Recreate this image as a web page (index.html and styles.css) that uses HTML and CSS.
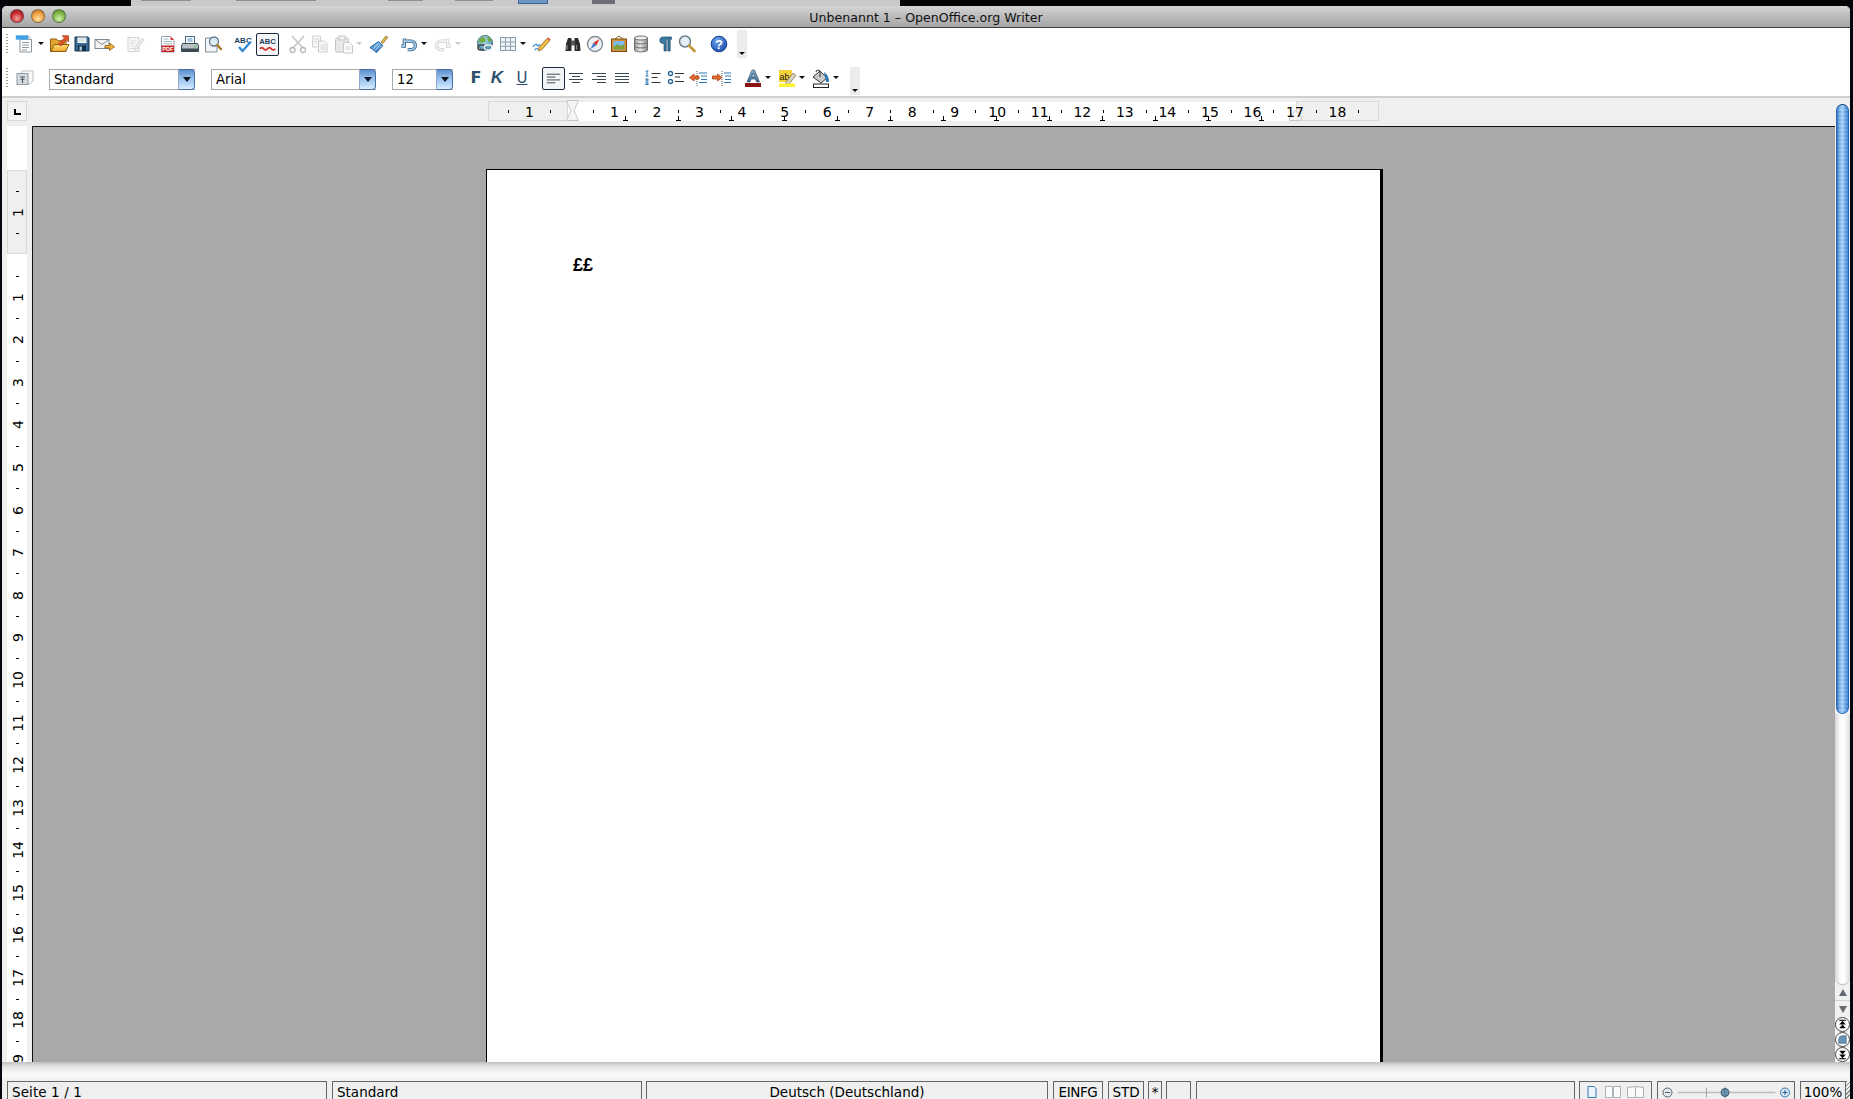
FILE: index.html
```html
<!DOCTYPE html>
<html lang="de">
<head>
<meta charset="utf-8">
<title>Unbenannt 1 – OpenOffice.org Writer</title>
<link rel="stylesheet" href="styles.css">
</head>
<body>
<svg class="sprite" xmlns="http://www.w3.org/2000/svg" width="0" height="0">
  <defs>
    <linearGradient id="gBlue" x1="0" y1="0" x2="0" y2="1"><stop offset="0" stop-color="#8cc0ea"/><stop offset="1" stop-color="#2f78bd"/></linearGradient>
    <linearGradient id="gOrange" x1="0" y1="0" x2="0" y2="1"><stop offset="0" stop-color="#ffe07a"/><stop offset="1" stop-color="#eaa52a"/></linearGradient>
    <linearGradient id="gSteel" x1="0" y1="0" x2="0" y2="1"><stop offset="0" stop-color="#8fb2cf"/><stop offset="1" stop-color="#3e6a90"/></linearGradient>
    <radialGradient id="gHelp" cx=".4" cy=".3" r=".8"><stop offset="0" stop-color="#6fa5ee"/><stop offset="1" stop-color="#1647a8"/></radialGradient>
    <radialGradient id="gGlobe" cx=".4" cy=".3" r=".8"><stop offset="0" stop-color="#bfe3f0"/><stop offset="1" stop-color="#3d85a8"/></radialGradient>
    <linearGradient id="gDb" x1="0" y1="0" x2="1" y2="0"><stop offset="0" stop-color="#9b9b9b"/><stop offset=".45" stop-color="#e8e8e8"/><stop offset="1" stop-color="#8a8a8a"/></linearGradient>

    <symbol id="i-new" viewBox="0 0 22 22">
      <path d="M5 6.500h11.500V19H5z" fill="#fff" stroke="#8c959c"/><path d="M7 9.500h7M7 12h7M7 14.500h7M7 17h5" stroke="#8d979f" fill="none"/>
      <rect x="1" y="2.500" width="12" height="4" fill="#3ba0e6" stroke="#5fb5ee" stroke-width=".5"/><path d="M13 2.500l3.500 4H13z" fill="#e4e8ea" stroke="#8c959c" stroke-width=".6"/>
    </symbol>
    <symbol id="i-open" viewBox="0 0 22 22">
      <path d="M2.500 18.500V6h6l1.500 1.800h8v10.700z" fill="#e6a430" stroke="#8f5c10"/>
      <path d="M3 18.500l3-7h15l-3.300 7z" fill="url(#gOrange)" stroke="#8f5c10"/>
      <path d="M10.500 11L16.500 5l-2.300-2.200H20.500V9l-2.200-2.200L13 13z" fill="#e2562b" stroke="#9a2f14" stroke-width=".7"/>
    </symbol>
    <symbol id="i-save" viewBox="0 0 22 22">
      <path d="M4 4h13l1 1v13H4z" fill="#3a6a92" stroke="#17364f"/>
      <rect x="6.500" y="4.500" width="9" height="5.500" fill="#fff"/><path d="M7.500 6h7M7.500 8h7" stroke="#a9bccb" stroke-width=".8"/>
      <rect x="7" y="12.500" width="8" height="5.500" fill="#12324b"/><rect x="8.500" y="13.500" width="2.500" height="4" fill="#a8c2d5"/>
    </symbol>
    <symbol id="i-mail" viewBox="0 0 22 22">
      <rect x="1" y="6.500" width="14" height="9" fill="#f3f3f3" stroke="#7e8c97"/><path d="M1 6.500l7 5 7-5" fill="none" stroke="#7e8c97"/>
      <path d="M11 12.500h4.500V10l5 3.800-5 3.700v-2.500H11z" fill="#efb23a" stroke="#8b5c12" stroke-width=".8"/>
    </symbol>
    <symbol id="i-edit" viewBox="0 0 22 22">
      <path d="M4 4.500h11v14H4z" fill="#f7f7f7" stroke="#d3d3d3"/><path d="M6 8h7M6 10.500h5M6 13h4M6 15.500h6" stroke="#dadada"/>
      <path d="M11 14.500l7-9 2 1.600-7 8.800-2.600.9z" fill="#ececec" stroke="#cfcfcf" stroke-width=".8"/>
    </symbol>
    <symbol id="i-pdf" viewBox="0 0 22 22">
      <path d="M4.500 3.500h9l3.500 3.500v12H4.500z" fill="#fff" stroke="#9aa3aa"/><path d="M13.500 3.500l3.500 3.500h-3.500z" fill="#e23b3b"/>
      <path d="M6.500 6h5M6.500 8.500h8.500M6.500 10.800h8.500" stroke="#9fb2c2"/>
      <rect x="4.500" y="12.500" width="12.500" height="6.500" fill="#cf2222"/><text x="10.800" y="18" class="svg-pdf" text-anchor="middle">PDF</text>
    </symbol>
    <symbol id="i-print" viewBox="0 0 22 22">
      <rect x="6.500" y="3.500" width="9" height="8" fill="#fff" stroke="#4b6a84"/><path d="M8.500 6h5M8.500 8h5" stroke="#4b8bc0"/>
      <path d="M3.500 10.500h15l1 2.500v5.500h-17V13z" fill="#b9c0c5" stroke="#3a4a55"/><rect x="3" y="15.500" width="16" height="3" fill="#3c4a54"/><circle cx="16" cy="13.500" r=".9" fill="#58c14c"/>
    </symbol>
    <symbol id="i-preview" viewBox="0 0 22 22">
      <path d="M3.500 5h8.500l3 3v11H3.500z" fill="#f2f5f7" stroke="#7e8c97"/>
      <circle cx="12" cy="8.500" r="4.500" fill="#dcebf5" fill-opacity=".9" stroke="#5f7485" stroke-width="1.300"/>
      <path d="M15.300 12l3.700 4.200" stroke="#a8762a" stroke-width="2.300" stroke-linecap="round"/>
    </symbol>
    <symbol id="i-spell" viewBox="0 0 22 22">
      <text x="11" y="10" class="svg-abc" text-anchor="middle">ABC</text>
      <path d="M7 14l3.500 4 8-9" fill="none" stroke="#2f8bd6" stroke-width="2.300"/>
    </symbol>
    <symbol id="i-autospell" viewBox="0 0 22 22">
      <text x="11" y="10.500" class="svg-abc" text-anchor="middle">ABC</text>
      <path d="M3 15.500q2-2.500 4 0t4 0 4 0 4 0" fill="none" stroke="#d62a20" stroke-width="1.800"/>
    </symbol>
    <symbol id="i-cut" viewBox="0 0 22 22">
      <path d="M5 3l11 12M17 3L6 15" stroke="#c9c9c9" stroke-width="1.800" fill="none"/>
      <circle cx="5.500" cy="17" r="2.500" fill="none" stroke="#b8b8b8" stroke-width="1.300"/><circle cx="16" cy="17" r="2.500" fill="none" stroke="#b8b8b8" stroke-width="1.300"/>
    </symbol>
    <symbol id="i-copy" viewBox="0 0 22 22">
      <path d="M3.500 3h8v11h-8z" fill="#f7f7f7" stroke="#d0d0d0"/><path d="M9.500 8h6l2.500 2.500V19H9.500z" fill="#f7f7f7" stroke="#cbcbcb"/>
      <path d="M11.500 12h5M11.500 14h5M11.500 16h5" stroke="#d5d5d5"/><path d="M5 6h5M5 8.500h3" stroke="#d5d5d5"/>
    </symbol>
    <symbol id="i-paste" viewBox="0 0 22 22">
      <rect x="2.500" y="5" width="13" height="14" rx="1.500" fill="#e8e8e8" stroke="#c3c3c3"/><rect x="6" y="3" width="6" height="4" fill="#f3f3f3" stroke="#c3c3c3"/>
      <path d="M10.500 9.500h6l3 3V20h-9z" fill="#fbfbfb" stroke="#c8c8c8"/><path d="M12.500 14h5M12.500 16h5" stroke="#d5d5d5"/>
    </symbol>
    <symbol id="i-brush" viewBox="0 0 22 22">
      <path d="M14 9l5-6 1.800 1.500-5 6z" fill="#e8b94a" stroke="#80601c" stroke-width=".7"/>
      <path d="M3 14.500l8.500-6 4.300 4L9.500 19.500z" fill="url(#gBlue)" stroke="#1f5d96"/>
      <path d="M5.500 16.500l5-5M7.500 18l5-5" stroke="#d5eafb" stroke-width=".8"/>
    </symbol>
    <symbol id="i-undo" viewBox="0 0 22 22">
      <g transform="translate(11 11) scale(.85) translate(-11 -11)">
        <path d="M5.500 4.500v9H2M5.500 7.500h8a5 5 0 0 1 0 10h-4" fill="none" stroke="#2f5d84" stroke-width="3.800"/>
        <path d="M5.500 4.500v9H2M5.500 7.500h8a5 5 0 0 1 0 10h-4" fill="none" stroke="#a9cbe6" stroke-width="2"/>
      </g>
    </symbol>
    <symbol id="i-redo" viewBox="0 0 22 22">
      <g transform="translate(11 11) scale(.85) translate(-11 -11)">
        <path d="M16.500 4.500v9H20M16.500 7.500h-8a5 5 0 0 0 0 10h4" fill="none" stroke="#cdcdcd" stroke-width="3.800"/>
        <path d="M16.500 4.500v9H20M16.500 7.500h-8a5 5 0 0 0 0 10h4" fill="none" stroke="#f6f6f6" stroke-width="2"/>
      </g>
    </symbol>
    <symbol id="i-globe" viewBox="0 0 22 22">
      <circle cx="11" cy="10" r="7.500" fill="url(#gGlobe)" stroke="#46707f"/>
      <path d="M5.500 6q3-3 5.500-1l1 3-4 2-3-1zM13 4q3 0 4.500 4l-3 1z" fill="#6fae3e"/>
      <rect x="4" y="12" width="7.500" height="5" rx="2.500" fill="none" stroke="#39464d" stroke-width="1.500"/><rect x="10.500" y="12" width="7.500" height="5" rx="2.500" fill="none" stroke="#e8eef1" stroke-width="1.500"/>
    </symbol>
    <symbol id="i-table" viewBox="0 0 22 22">
      <rect x="3.500" y="4.500" width="15" height="13" fill="#eef3f6" stroke="#8aa0b0"/>
      <path d="M8.500 4.500v13M13.500 4.500v13M3.500 9h15M3.500 13.300h15" stroke="#8aa0b0"/>
    </symbol>
    <symbol id="i-pencil" viewBox="0 0 22 22">
      <path d="M2 14q2.500-4 4-2t3-1" fill="none" stroke="#3e8bd2" stroke-width="1.300"/><path d="M3.500 17q2-2 3.500-1" fill="none" stroke="#3e8bd2" stroke-width="1.300"/>
      <path d="M8 14.500l8-9 2.700 2.200-8 9-3.400 1.100z" fill="#f2c04a" stroke="#8c5f14" stroke-width=".8"/><path d="M16 5.500l2.700 2.200 1-1.500-2.400-1.900z" fill="#e0584e"/>
    </symbol>
    <symbol id="i-binoc" viewBox="0 0 22 22">
      <path d="M4 11l2-6h3.500v13H3.500z" fill="#2a2a2a"/><path d="M18 11l-2-6h-3.500v13h6z" fill="#2a2a2a"/><rect x="9" y="7.500" width="4" height="5" fill="#555"/>
      <path d="M5 12v4.500M14.500 12v4.500" stroke="#888" stroke-width="1.300"/>
    </symbol>
    <symbol id="i-compass" viewBox="0 0 22 22">
      <circle cx="11" cy="11" r="7.500" fill="#eef1f3" stroke="#7f8a92" stroke-width="1.300"/>
      <path d="M15.500 6l-6 3.700 2.800 2.800z" fill="#d8322a"/><path d="M6.500 16l3-6.300 2.800 2.800z" fill="#3d7fcf"/>
    </symbol>
    <symbol id="i-picture" viewBox="0 0 22 22">
      <path d="M7 6l4-3 4 3" fill="none" stroke="#8a5a1c"/><rect x="3.500" y="6" width="15" height="12.500" fill="#d88e2e" stroke="#7a4c12"/>
      <rect x="5.500" y="8" width="11" height="8.500" fill="#7dbcf0"/><path d="M5.500 16.500v-2.500l4-3 3 2 4-2v5.500z" fill="#7f9f38"/>
    </symbol>
    <symbol id="i-db" viewBox="0 0 22 22">
      <path d="M4.500 5v12c0 2.500 13 2.500 13 0V5z" fill="url(#gDb)" stroke="#6e6e6e"/><ellipse cx="11" cy="5" rx="6.500" ry="2" fill="#efefef" stroke="#6e6e6e"/>
      <path d="M4.500 9c0 2.500 13 2.500 13 0M4.500 13c0 2.500 13 2.500 13 0" fill="none" stroke="#6e6e6e"/>
    </symbol>
    <symbol id="i-para" viewBox="0 0 22 22">
      <path d="M10 18V10.500H8.500a3.300 3.300 0 0 1 0-6.500H17.500v2.300h-1.300V18h-2.400V6.300H12.300V18z" fill="#3a7aa5" stroke="#163c58" stroke-width=".6"/>
    </symbol>
    <symbol id="i-find" viewBox="0 0 22 22">
      <circle cx="9" cy="8.500" r="5.500" fill="#e3f0f8" stroke="#6d7e8a" stroke-width="1.500"/>
      <path d="M13 12.500l5.500 5.500" stroke="#c49536" stroke-width="2.600" stroke-linecap="round"/>
    </symbol>
    <symbol id="i-help" viewBox="0 0 22 22">
      <circle cx="11" cy="11" r="7.800" fill="url(#gHelp)" stroke="#123f92"/>
      <text x="11" y="15.500" class="svg-help" text-anchor="middle">?</text>
    </symbol>
    <symbol id="i-style" viewBox="0 0 22 22">
      <path d="M8 4h11v10l-3 3H8z" fill="#fafafa" stroke="#bcc2c6"/><rect x="3" y="6.500" width="11" height="11" fill="#d6dbdf" stroke="#8f9aa2"/>
      <path d="M6 10h5M8.500 10v6" stroke="#4f5f6a" stroke-width="1.100"/><path d="M6.500 12.500h4" stroke="#4f5f6a"/>
    </symbol>
    <symbol id="i-al" viewBox="0 0 22 22"><path d="M4 6.500h14M4 9.500h9M4 12.500h14M4 15.500h9" stroke="#3a4a55" fill="none"/></symbol>
    <symbol id="i-ac" viewBox="0 0 22 22"><path d="M4 6.500h14M7 9.500h8M4 12.500h14M7 15.500h8" stroke="#3a4a55" fill="none"/></symbol>
    <symbol id="i-ar" viewBox="0 0 22 22"><path d="M4 6.500h14M9 9.500h9M4 12.500h14M9 15.500h9" stroke="#3a4a55" fill="none"/></symbol>
    <symbol id="i-aj" viewBox="0 0 22 22"><path d="M4 6.500h14M4 9.500h14M4 12.500h14M4 15.500h14" stroke="#3a4a55" fill="none"/></symbol>
    <symbol id="i-num" viewBox="0 0 22 22">
      <path d="M9.500 6.500h9M9.500 10.500h6M9.500 15.500h9" stroke="#333" stroke-width="1.200" fill="none"/>
      <path d="M5 4v5M3.500 4h3M3.500 9h3M3.500 12h3M3.500 17.500h3M4.200 12v5.500M5.800 12v5.500" stroke="#2f79b5" fill="none"/>
    </symbol>
    <symbol id="i-bul" viewBox="0 0 22 22">
      <circle cx="5.500" cy="6.500" r="2" fill="none" stroke="#2a6a9c" stroke-width="1.400"/><circle cx="5.500" cy="14.500" r="2" fill="none" stroke="#2a6a9c" stroke-width="1.400"/>
      <path d="M10 6.500h9M10 10h5M10 14.500h9" stroke="#333" stroke-width="1.200" fill="none"/>
    </symbol>
    <symbol id="i-less" viewBox="0 0 22 22">
      <path d="M9 4v15" stroke="#555" stroke-dasharray="1 1" fill="none"/>
      <path d="M11 6h8M13 9h6M13 12.500h6M11 15.500h8" stroke="#2f79b5" stroke-width="1.200" fill="none"/>
      <path d="M1.500 10.500l4.500-3.500v2h5v3H6v2z" fill="#e86a2a" stroke="#9c3a10" stroke-width=".7"/>
    </symbol>
    <symbol id="i-more" viewBox="0 0 22 22">
      <path d="M11 4v15" stroke="#555" stroke-dasharray="1 1" fill="none"/>
      <path d="M13 6h7M14 9h6M14 12.500h6M13 15.500h7" stroke="#2f79b5" stroke-width="1.200" fill="none"/>
      <path d="M11 10.500L6.500 7v2h-5v3h5v2z" fill="#e86a2a" stroke="#9c3a10" stroke-width=".7"/>
    </symbol>
    <symbol id="i-fcolor" viewBox="0 0 22 22">
      <path d="M5 15L10 3h2.500L17.500 15h-3l-1-3h-4.500l-1 3zM9.800 9.800h3L11.300 6z" fill="url(#gSteel)" stroke="#1e4668" stroke-width=".6"/>
      <rect x="3" y="16" width="16" height="4" fill="#8d1414"/>
    </symbol>
    <symbol id="i-high" viewBox="0 0 22 22">
      <rect x="3" y="3" width="13" height="12" fill="#f5d23a"/><text x="3.500" y="12.500" class="svg-ab">ab</text>
      <path d="M10 15l7-9 3 2.400-7 8.600-3.500.8z" fill="#d9d2bc" stroke="#77705e" stroke-width=".7"/>
      <rect x="3" y="16.500" width="16" height="3.500" fill="#fff134"/>
    </symbol>
    <symbol id="i-bg" viewBox="0 0 22 22">
      <path d="M3 10l7-6 7 7-6 5z" fill="#c9c9c9" stroke="#333"/><path d="M6 5a2 2 0 0 1 4 0v5" fill="none" stroke="#333"/>
      <path d="M14 5q5 3 5 10h-3z" fill="#2f79b5"/><rect x="3.500" y="17" width="15" height="3.500" fill="#fff" stroke="#222"/>
    </symbol>
    <symbol id="i-prev" viewBox="0 0 14 14">
      <path d="M3.500 2.500h7" stroke="#000" stroke-width="1.200"/><path d="M7 3l3.500 4h-7z" fill="#000"/><path d="M7 7l3.500 4h-7z" fill="#000"/>
    </symbol>
    <symbol id="i-nextp" viewBox="0 0 14 14">
      <path d="M3.500 11.500h7" stroke="#000" stroke-width="1.200"/><path d="M7 11l3.500-4h-7z" fill="#000"/><path d="M7 7l3.500-4h-7z" fill="#000"/>
    </symbol>
    <symbol id="i-navi" viewBox="0 0 14 14">
      <path d="M3 11V7a4 4 0 0 1 4-4h4v8z" fill="#6d94b4" stroke="#3f6685" stroke-width=".8"/>
    </symbol>
  </defs>
</svg>

<div class="desktop">
  <div class="desktop-gap">
    <span class="tab tab-a"></span><span class="tab tab-b"></span><span class="tab tab-c"></span><span class="tab tab-d"></span>
    <span class="dock dock-blue"></span><span class="dock dock-grey"></span>
  </div>
</div>

<div class="window">
  <header class="titlebar">
    <div class="lights"><span class="light red"></span><span class="light orange"></span><span class="light green"></span></div>
    <div class="title">Unbenannt 1 – OpenOffice.org Writer</div>
  </header>

  <div class="toolbars">
    <div class="tbar">
      <span class="grip"></span>
      <svg class="ic ml7"><use href="#i-new"/></svg><span class="drop"></span>
      <svg class="ic ml3"><use href="#i-open"/></svg>
      <svg class="ic ml1"><use href="#i-save"/></svg>
      <svg class="ic ml1"><use href="#i-mail"/></svg>
      <svg class="ic ml8"><use href="#i-edit"/></svg>
      <svg class="ic ml11"><use href="#i-pdf"/></svg>
      <svg class="ic"><use href="#i-print"/></svg>
      <svg class="ic ml1"><use href="#i-preview"/></svg>
      <svg class="ic ml8"><use href="#i-spell"/></svg>
      <span class="toggle ml2"><svg class="ic"><use href="#i-autospell"/></svg></span>
      <svg class="ic ml8"><use href="#i-cut"/></svg>
      <svg class="ic"><use href="#i-copy"/></svg>
      <svg class="ic ml2"><use href="#i-paste"/></svg><span class="drop off"></span>
      <svg class="ic ml4"><use href="#i-brush"/></svg>
      <svg class="ic ml9"><use href="#i-undo"/></svg><span class="drop"></span>
      <svg class="ic ml4"><use href="#i-redo"/></svg><span class="drop off"></span>
      <svg class="ic ml12"><use href="#i-globe"/></svg>
      <svg class="ic ml1"><use href="#i-table"/></svg><span class="drop"></span>
      <svg class="ic ml4"><use href="#i-pencil"/></svg>
      <svg class="ic ml9"><use href="#i-binoc"/></svg>
      <svg class="ic"><use href="#i-compass"/></svg>
      <svg class="ic ml2"><use href="#i-picture"/></svg>
      <svg class="ic"><use href="#i-db"/></svg>
      <svg class="ic ml2"><use href="#i-para"/></svg>
      <svg class="ic"><use href="#i-find"/></svg>
      <svg class="ic ml10"><use href="#i-help"/></svg>
      <span class="overflow ml7"></span>
    </div>
    <div class="tbar tbar-format">
      <span class="grip"></span>
      <svg class="ic ml6"><use href="#i-style"/></svg>
      <div class="combo combo-style ml13"><span class="combo-text">Standard</span><span class="combo-btn"></span></div>
      <div class="combo combo-font ml16"><span class="combo-text">Arial</span><span class="combo-btn"></span></div>
      <div class="combo combo-size ml16"><span class="combo-text">12</span><span class="combo-btn"></span></div>
      <span class="fmt ml12">F</span>
      <span class="fmt fmt-i">K</span>
      <span class="fmt fmt-u ml3">U</span>
      <span class="toggle ml9"><svg class="ic"><use href="#i-al"/></svg></span>
      <svg class="ic"><use href="#i-ac"/></svg>
      <svg class="ic ml1"><use href="#i-ar"/></svg>
      <svg class="ic ml1"><use href="#i-aj"/></svg>
      <svg class="ic ml9"><use href="#i-num"/></svg>
      <svg class="ic ml1"><use href="#i-bul"/></svg>
      <svg class="ic ml1"><use href="#i-less"/></svg>
      <svg class="ic ml1"><use href="#i-more"/></svg>
      <svg class="ic ml9"><use href="#i-fcolor"/></svg><span class="drop"></span>
      <svg class="ic ml4"><use href="#i-high"/></svg><span class="drop"></span>
      <svg class="ic ml4"><use href="#i-bg"/></svg><span class="drop"></span>
      <span class="overflow ml10"></span>
    </div>
  </div>

  <main class="work">
    <div class="corner"><span class="corner-box"><span class="corner-l"></span></span></div>

    <div class="hruler-row">
      <div class="hruler">
        <span class="margin-box margin-left"></span>
        <span class="margin-box margin-right"></span>
        <svg class="indent indent-a" viewBox="0 0 13 21"><path d="M.5.500h12L8 10.500l4.500 10H.5L5 10.500z" fill="#f4f4f4" stroke="#c8c8c8"/></svg>
        <svg class="indent indent-b" viewBox="0 0 13 21"><path d="M6.500 10.500l6 6v4H.5v-4z" fill="#f4f4f4" stroke="#c8c8c8"/></svg>
        <div class="tabs"><i></i><i></i><i></i><i></i><i></i><i></i><i></i><i></i><i></i><i></i><i></i><i></i><i></i></div>
        <div class="hscale">
          <span class="t"></span><span class="n">1</span><span class="t"></span><span class="b"></span>
          <span class="t"></span><span class="n">1</span><span class="t"></span><span class="n">2</span>
          <span class="t"></span><span class="n">3</span><span class="t"></span><span class="n">4</span>
          <span class="t"></span><span class="n">5</span><span class="t"></span><span class="n">6</span>
          <span class="t"></span><span class="n">7</span><span class="t"></span><span class="n">8</span>
          <span class="t"></span><span class="n">9</span><span class="t"></span><span class="n">10</span>
          <span class="t"></span><span class="n">11</span><span class="t"></span><span class="n">12</span>
          <span class="t"></span><span class="n">13</span><span class="t"></span><span class="n">14</span>
          <span class="t"></span><span class="n">15</span><span class="t"></span><span class="n">16</span>
          <span class="t"></span><span class="n">17</span><span class="t"></span><span class="n">18</span>
          <span class="t"></span>
        </div>
      </div>
    </div>

    <div class="scrollbar">
      <div class="thumb"></div>
      <div class="track"></div>
      <div class="arrow-btn arrow-up"></div>
      <div class="arrow-btn arrow-down"></div>
      <div class="round"><svg class="round-ic"><use href="#i-prev"/></svg></div>
      <div class="round"><svg class="round-ic"><use href="#i-navi"/></svg></div>
      <div class="round"><svg class="round-ic"><use href="#i-nextp"/></svg></div>
    </div>

    <div class="vruler">
      <div class="vstrip">
        <span class="vmargin"></span>
        <div class="vscale">
          <span class="t"></span><span class="n"><b>1</b></span><span class="t"></span><span class="b"></span>
          <span class="t"></span><span class="n"><b>1</b></span><span class="t"></span><span class="n"><b>2</b></span>
          <span class="t"></span><span class="n"><b>3</b></span><span class="t"></span><span class="n"><b>4</b></span>
          <span class="t"></span><span class="n"><b>5</b></span><span class="t"></span><span class="n"><b>6</b></span>
          <span class="t"></span><span class="n"><b>7</b></span><span class="t"></span><span class="n"><b>8</b></span>
          <span class="t"></span><span class="n"><b>9</b></span><span class="t"></span><span class="n"><b>10</b></span>
          <span class="t"></span><span class="n"><b>11</b></span><span class="t"></span><span class="n"><b>12</b></span>
          <span class="t"></span><span class="n"><b>13</b></span><span class="t"></span><span class="n"><b>14</b></span>
          <span class="t"></span><span class="n"><b>15</b></span><span class="t"></span><span class="n"><b>16</b></span>
          <span class="t"></span><span class="n"><b>17</b></span><span class="t"></span><span class="n"><b>18</b></span>
          <span class="t"></span><span class="n"><b>19</b></span>
        </div>
      </div>
    </div>

    <div class="doc">
      <div class="page"><p class="para">££</p></div>
    </div>
  </main>

  <footer class="status">
    <div class="panel w-page">Seite 1 / 1</div>
    <div class="panel w-style gap5">Standard</div>
    <div class="panel w-lang gap4 centered">Deutsch (Deutschland)</div>
    <div class="panel w-ins gap5 centered">EINFG</div>
    <div class="panel w-std gap5 centered">STD</div>
    <div class="panel w-star gap4 centered">*</div>
    <div class="panel w-blank gap4"></div>
    <div class="panel w-info gap5"></div>
    <div class="panel w-views gap4">
      <svg class="views" viewBox="0 0 71 18" width="71" height="18">
        <path d="M8 4.500h6l2 2v9H8z" fill="#eaf2fa" stroke="#2f79b5"/>
        <path d="M25.500 4.500h7v11h-7zM33.500 4.500h7v11h-7z" fill="#fafafa" stroke="#a8b2ba"/>
        <path d="M47.500 5.500l8-1v11h-8zM55.500 4.500l8 1v10h-8z" fill="#fafafa" stroke="#a8b2ba"/>
      </svg>
    </div>
    <div class="panel w-zoom gap5">
      <svg class="zoombar" viewBox="0 0 138 18" width="138" height="18">
        <circle cx="9.500" cy="10.500" r="4.500" fill="#e2e9ee" stroke="#53636f"/><path d="M7 10.500h5" stroke="#53636f"/>
        <path d="M19.500 10.500h98" stroke="#bdbdbd" stroke-width="1.400"/><path d="M48.500 5.500v10" stroke="#a5a5a5"/>
        <circle cx="67" cy="10.500" r="4" fill="#6f94b0" stroke="#3a5c76"/><path d="M67 4.500v12" stroke="#3a5c76" stroke-opacity=".5"/>
        <circle cx="127" cy="10.500" r="4.500" fill="#e2e9ee" stroke="#2f79b5"/><path d="M124.500 10.500h5M127 8v5" stroke="#1d5f96"/>
      </svg>
    </div>
    <div class="panel w-pct gap5 centered">100%</div>
    <span class="sizegrip"></span>
  </footer>
</div>
</body>
</html>
```
FILE: styles.css
```css
* { box-sizing: border-box; }
html, body { margin: 0; padding: 0; }
body {
  width: 1853px;
  height: 1099px;
  overflow: hidden;
  background: #05090f;
  display: flex;
  flex-direction: column;
  font-family: "DejaVu Sans", "Liberation Sans", sans-serif;
  color: #000;
}
.sprite { position: absolute; width: 0; height: 0; }

/* desktop strip */
.desktop { height: 6px; flex: none; background: #030507; padding-left: 131px; }
.desktop-gap { position: relative; width: 769px; height: 6px; background: #c9c9c9; overflow: hidden; }
.tab { position: absolute; top: 0; height: 1px; background: #8f8f8f; }
.tab-a { left: 10px; width: 50px; }
.tab-b { left: 105px; width: 80px; }
.tab-c { left: 257px; width: 35px; }
.tab-d { left: 324px; width: 38px; }
.dock { position: absolute; top: 0; height: 4px; }
.dock-blue { left: 387px; width: 30px; background: #6d96c6; border: 1px solid #3f6794; border-top: 0; }
.dock-grey { left: 461px; width: 23px; background: #6c7076; }

/* window */
.window {
  flex: 1;
  min-height: 0;
  margin: 0 3px 0 2px;
  display: flex;
  flex-direction: column;
  background: #fff;
  border-radius: 5px 5px 0 0;
  overflow: hidden;
}
.titlebar {
  flex: none;
  height: 22px;
  position: relative;
  display: flex;
  justify-content: center;
  align-items: center;
  background: linear-gradient(#d6d6d6, #bdbdbd 45%, #a6a6a6);
  border-bottom: 1px solid #3e3e3e;
}
.title { font-size: 12.6px; color: #111; padding-top: 1px; }
.lights { position: absolute; left: 8px; top: 3px; display: flex; gap: 7px; }
.light { width: 14px; height: 14px; border-radius: 50%; border: 1px solid rgba(70, 70, 70, .55); }
.red { background: radial-gradient(circle at 50% 70%, #f6a4a0, #c82a2e 55%, #8c1a20); }
.orange { background: radial-gradient(circle at 50% 75%, #ffe3a0, #eca040 55%, #b26a20); }
.green { background: radial-gradient(circle at 50% 75%, #d3f0a8, #82ba4a 55%, #4d8a2c); }

/* toolbars */
.toolbars { flex: none; height: 68px; background: #fff; }
.tbar { height: 34px; display: flex; align-items: center; padding: 0 0 2px 4px; }
.tbar-format { padding: 0 0 0 4px; }
.tbar-format .ic, .tbar-format .drop, .tbar-format .fmt, .tbar-format .toggle, .tbar-format .grip { margin-bottom: 2px; }
.tbar-format .overflow { margin-bottom: -4px; }
.grip {
  flex: none;
  width: 2px;
  height: 21px;
  background: repeating-linear-gradient(#9a9a9a 0 1px, transparent 1px 3px);
}
.ic { flex: none; width: 22px; height: 22px; display: block; }
.drop { flex: none; width: 8px; height: 22px; position: relative; }
.drop::after {
  content: "";
  position: absolute;
  left: 1px;
  top: 9px;
  border: 3px solid transparent;
  border-top: 3px solid #111;
  border-bottom: 0;
}
.drop.off::after { border-top-color: #c9c9c9; }
.toggle {
  flex: none;
  width: 23px;
  height: 23px;
  border: 1px solid #1b2a3a;
  border-radius: 2px;
  background: #f2f4f6;
  display: flex;
  align-items: center;
  justify-content: center;
}
.toggle .ic { margin: 0 !important; width: 21px; height: 21px; }
.overflow { flex: none; width: 10px; height: 28px; background: #ececec; position: relative; }
.overflow::after {
  content: "";
  position: absolute;
  left: 2px;
  bottom: 3px;
  border: 3px solid transparent;
  border-top: 3px solid #111;
  border-bottom: 0;
}
.ml1 { margin-left: 1px; } .ml2 { margin-left: 2px; } .ml3 { margin-left: 3px; }
.ml4 { margin-left: 4px; } .ml6 { margin-left: 6px; } .ml7 { margin-left: 7px; }
.ml8 { margin-left: 8px; } .ml9 { margin-left: 9px; } .ml10 { margin-left: 10px; }
.ml11 { margin-left: 11px; } .ml12 { margin-left: 12px; } .ml13 { margin-left: 13px; }
.ml16 { margin-left: 16px; }

.combo {
  flex: none;
  height: 21px;
  display: flex;
  align-items: center;
  border: 1px solid #a9a9a9;
  border-right: 0;
  background: #fff;
  font-size: 13.200px;
}
.combo-style { width: 146px; }
.combo-font { width: 165px; }
.combo-size { width: 61px; }
.combo-text { flex: 1; padding-left: 4px; }
.combo-btn {
  flex: none;
  width: 17px;
  height: 21px;
  margin: -1px 0;
  position: relative;
  background: linear-gradient(#5f8fcc, #93bdea 40%, #b6d8f8 75%, #dceeff);
  border: 1px solid #4a6fa5;
  border-left-color: #8fa9c9;
  border-radius: 0 4px 4px 0;
}
.combo-btn::after {
  content: "";
  position: absolute;
  left: 4px;
  top: 7px;
  border: 4px solid transparent;
  border-top: 5px solid #0c1826;
  border-bottom: 0;
}
.fmt {
  flex: none;
  width: 22px;
  height: 22px;
  line-height: 22px;
  text-align: center;
  font-size: 16px;
  font-weight: bold;
  color: #2c4f6c;
}
.fmt-i { font-style: italic; font-size: 17px; font-family: "Liberation Sans", sans-serif; margin-left: -1px; }
.fmt-u { font-weight: normal; text-decoration: underline; font-size: 15px; }

/* svg texts */
.svg-pdf { font: bold 5.500px "Liberation Sans", sans-serif; fill: #fff; }
.svg-abc { font: bold 8px "Liberation Sans", sans-serif; fill: #1c3f5c; }
.svg-help { font: bold 13px "Liberation Sans", sans-serif; fill: #fff; }
.svg-ab { font: 9px "Liberation Sans", sans-serif; fill: #111; }

/* work area */
.work {
  flex: 1;
  min-height: 0;
  display: grid;
  grid-template-columns: 30px 1fr 15px;
  grid-template-rows: 28px 1fr;
  border-top: 2px solid #cfcfcf;
  background: #efefef;
}
.corner { padding: 3px 0 0 5px; }
.corner-box {
  display: block;
  width: 20px;
  height: 20px;
  border: 1px solid #d6d6d6;
  background: #f3f3f3;
  position: relative;
}
.corner-l {
  position: absolute;
  left: 6px;
  top: 7px;
  width: 7px;
  height: 6px;
  border-left: 2px solid #000;
  border-bottom: 2px solid #000;
}
.hruler-row { min-width: 0; padding: 4px 0 0 456px; }
.hruler {
  position: relative;
  width: 891px;
  height: 19px;
  background: #fff;
}
.margin-box { position: absolute; top: -1px; height: 20px; background: #efefef; border: 1px solid #d8d8d8; }
.margin-left { left: 0; width: 80px; }
.margin-right { right: 0; width: 83px; background: #f0f0f0; }
.indent { position: absolute; top: -2px; width: 13px; height: 21px; }
.indent-a { left: 78px; }
.indent-b { left: 801px; }
.tabs {
  position: absolute;
  left: 134.500px;
  top: 14px;
  width: 641px;
  display: flex;
  justify-content: space-between;
}
.tabs i {
  display: block;
  width: 5px;
  height: 5px;
  background: linear-gradient(#000, #000) center top / 1px 5px no-repeat, linear-gradient(#000, #000) center bottom / 5px 1px no-repeat;
}
.hscale { position: relative; display: flex; padding-left: 9.500px; height: 19px; }
.hscale > span { flex: none; width: 21.270px; text-align: center; }
.hscale .n { font-size: 14px; line-height: 21px; white-space: nowrap; }
.hscale .t { display: flex; align-items: center; justify-content: center; }
.hscale .t::before { content: ""; width: 1px; height: 3px; background: #000; }

.vruler { min-height: 0; overflow: hidden; padding-left: 5px; }
.vstrip { position: relative; width: 20px; height: 100%; background: #fff; overflow: hidden; }
.vmargin { position: absolute; left: 0; top: 44px; width: 20px; height: 84px; background: #efefef; border: 1px solid #d8d8d8; }
.vscale { position: relative; display: flex; flex-direction: column; padding-top: 54.400px; }
.vscale > span { flex: none; height: 21.270px; display: flex; align-items: center; justify-content: center; }
.vscale .n b { font-weight: normal; font-size: 14px; writing-mode: vertical-rl; transform: rotate(180deg); white-space: nowrap; line-height: 20px; position: relative; left: 1px; }
.vscale .t::before { content: ""; width: 3px; height: 1px; background: #000; margin-left: 1px; }

.doc {
  min-width: 0;
  min-height: 0;
  overflow: hidden;
  background: #a9a9a9;
  border-top: 1px solid #111;
  border-left: 1px solid #111;
  padding: 42px 0 0 453px;
}
.page {
  width: 897px;
  height: 1100px;
  background: #fff;
  border: 1px solid #000;
  border-right-width: 3px;
  padding: 86px 0 0 86px;
}
.para {
  margin: 0;
  font: bold 18px/18px "Liberation Sans", sans-serif;
}

/* scrollbar */
.scrollbar {
  grid-column: 3;
  grid-row: 1 / span 2;
  display: flex;
  flex-direction: column;
  align-items: center;
  background: #f1f1f1;
  padding-top: 6px;
}
.thumb {
  flex: none;
  width: 13px;
  height: 610px;
  border-radius: 7px;
  border: 1px solid #2a66b4;
  border-top-color: #123f7c;
  background:
    repeating-linear-gradient(rgba(255,255,255,.1) 0 2px, rgba(0,0,0,.03) 2px 4px),
    linear-gradient(90deg, #2d6fc4, #7eb7ee 25%, #a6d1f8 50%, #6aa8ea 75%, #3b80d4);
}
.track {
  flex: 1;
  width: 15px;
  border-radius: 0 0 7px 7px;
  background: linear-gradient(90deg, #d4d4d4, #fbfbfb 35%, #ffffff 60%, #dcdcdc);
  border-bottom: 1px solid #bdbdbd;
}
.arrow-btn { flex: none; width: 15px; height: 16px; display: flex; align-items: center; justify-content: center; }
.arrow-up { border-bottom: 1px solid #d2d2d2; }
.arrow-up::after { content: ""; border: 4px solid transparent; border-bottom: 7px solid #646a70; border-top: 0; }
.arrow-down::after { content: ""; border: 4px solid transparent; border-top: 7px solid #646a70; border-bottom: 0; }
.round {
  flex: none;
  width: 15px;
  height: 15px;
  border: 1px solid #444;
  border-radius: 50%;
  background: #fff;
  display: flex;
  align-items: center;
  justify-content: center;
}
.round-ic { width: 13px; height: 13px; display: block; }

/* status bar */
.status {
  flex: none;
  height: 37px;
  display: flex;
  align-items: flex-start;
  padding: 19px 0 0 5px;
  background: linear-gradient(#bfbfbf 0, #e6e6e6 5px, #fafafa 13px, #f2f2f2 17px, #efefef 19px);
  font-size: 13.500px;
  overflow: hidden;
  position: relative;
}
.panel {
  flex: none;
  height: 30px;
  border: 1px solid #666;
  background: #efefef;
  padding: 2px 0 0 4px;
  line-height: 17px;
  white-space: nowrap;
  overflow: hidden;
}
.panel.centered { padding-left: 0; text-align: center; }
.gap4 { margin-left: 4px; }
.gap5 { margin-left: 5px; }
.w-page { width: 320px; letter-spacing: .1px; }
.w-style { width: 310px; }
.w-lang { width: 402px; }
.w-ins { width: 50px; letter-spacing: -.4px; }
.w-std { width: 36px; }
.w-star { width: 14px; }
.w-blank { width: 25px; }
.w-info { width: 379px; }
.w-views { width: 73px; padding: 0; }
.w-zoom { width: 138px; padding: 0; }
.w-pct { width: 46px; }
.views, .zoombar { display: block; }
.sizegrip {
  flex: none;
  width: 4px;
  height: 30px;
  background: repeating-linear-gradient(135deg, #888 0 1px, transparent 1px 3px);
}
```
